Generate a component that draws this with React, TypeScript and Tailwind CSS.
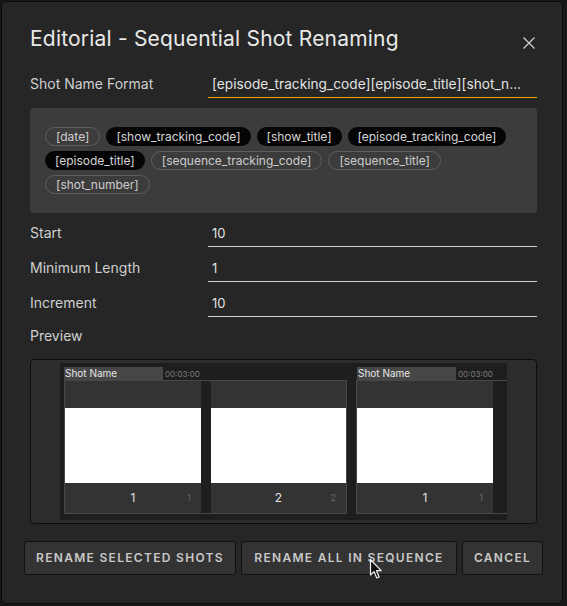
import clsx from "clsx";

type Token = { label: string; filled: boolean };

const tokenRows: Token[][] = [
  [
    { label: "[date]", filled: false },
    { label: "[show_tracking_code]", filled: true },
    { label: "[show_title]", filled: true },
    { label: "[episode_tracking_code]", filled: true },
  ],
  [
    { label: "[episode_title]", filled: true },
    { label: "[sequence_tracking_code]", filled: false },
    { label: "[sequence_title]", filled: false },
  ],
  [{ label: "[shot_number]", filled: false }],
];

function Chip({ token }: { token: Token }) {
  return (
    <span
      className={clsx(
        "inline-flex h-[19px] items-center whitespace-nowrap rounded-full px-[10px] text-[12px] leading-none",
        token.filled
          ? "bg-[#050505] text-[#d6d6d6]"
          : "border border-[#5e5e5e] text-[#cdcdcd]",
      )}
    >
      {token.label}
    </span>
  );
}

function FieldRow({
  label,
  value,
  accent,
}: {
  label: string;
  value: string;
  accent?: boolean;
}) {
  return (
    <div className="flex h-[25px]">
      <div className="flex w-[178px] shrink-0 items-center pb-[4px] text-[14px] text-[#cfcfcf]">
        {label}
      </div>
      <div
        className={clsx(
          "flex min-w-0 flex-1 items-center overflow-hidden whitespace-nowrap border-b pb-[1px] pl-[4px] text-[#e2e2e2]",
          accent ? "border-[#f0a30a] text-[13.7px]" : "border-[#cfcfcf] text-[13px]",
        )}
      >
        {value}
      </div>
    </div>
  );
}

function Panel({ n, width }: { n: number; width: string }) {
  return (
    <div className={clsx("flex shrink-0 flex-col", width)}>
      <div className="h-[27px] bg-[#333333]" />
      <div className="h-[75px] bg-white" />
      <div className="grid h-[30px] grid-cols-[1fr_auto_1fr] items-center bg-[#333333]">
        <span />
        <span className="text-[12px] text-[#e0e0e0]">{n}</span>
        <span className="justify-self-end pr-[10px] text-[9px] text-[#6a6a6a]">
          {n}
        </span>
      </div>
    </div>
  );
}

function ClipHeader({ offset }: { offset?: boolean }) {
  return (
    <div className={clsx("flex h-[13px] items-end", offset && "pl-px")}>
      <div className="h-[13px] w-[99px] bg-[#464646] pl-px text-[10px] leading-[13px] text-[#e6e6e6]">
        Shot Name
      </div>
      <span className="ml-[2px] text-[8px] leading-[11px] text-[#7c7c7c]">
        00:03:00
      </span>
    </div>
  );
}

function Cursor() {
  return (
    <svg
      width="14"
      height="22"
      viewBox="0 0 14 22"
      className="absolute left-[369px] top-[558px]"
    >
      <path
        d="M1.5 1.5 L1.5 17 L5 13.6 L7.8 20 L10.2 19 L7.5 12.7 L12.2 12.7 Z"
        fill="#111"
        stroke="#f2f2f2"
        strokeWidth="1.2"
        strokeLinejoin="round"
      />
    </svg>
  );
}

export default function App() {
  return (
    <div className="relative h-[606px] w-[567px] bg-[#171717] pl-px pt-px font-['Inter',sans-serif]">
      <div className="flex h-[603px] w-[562px] flex-col rounded-[5px] border border-[#0a0a0a] bg-[#262626] pl-[28px] pr-[25px] pt-[23px]">
        <div className="flex h-[28px] items-start justify-between">
          <h1 className="text-[21px] leading-[28px] tracking-[0.2px] text-[#e9e9e9]">
            Editorial - Sequential Shot Renaming
          </h1>
          <svg width="12" height="12" viewBox="0 0 12 12" className="mr-[2px] mt-[12px]">
            <path d="M0.5 0.5 L11.5 11.5 M11.5 0.5 L0.5 11.5" stroke="#cfcfcf" strokeWidth="1.3" />
          </svg>
        </div>

        <div className="mt-[20px]">
          <FieldRow
            label="Shot Name Format"
            value="[episode_tracking_code][episode_title][shot_n…"
            accent
          />
        </div>

        <div className="mt-[10px] flex h-[105px] flex-col gap-[5px] rounded-[4px] bg-[#3c3c3c] px-[15px] pt-[19px]">
          {tokenRows.map((row, i) => (
            <div key={i} className="flex gap-[6px]">
              {row.map((t) => (
                <Chip key={t.label} token={t} />
              ))}
            </div>
          ))}
        </div>

        <div className="mt-[9px] flex flex-col gap-[10px]">
          <FieldRow label="Start" value="10" />
          <FieldRow label="Minimum Length" value="1" />
          <FieldRow label="Increment" value="10" />
        </div>

        <div className="mt-[8px] flex h-[24px] items-center pb-[3px] text-[14px] text-[#cfcfcf]">
          Preview
        </div>

        <div className="mt-[10px] h-[165px] rounded-[4px] border border-[#0d0d0d] bg-[#2d2d2d] px-[29px] py-[3px]">
          <div className="flex h-[157px] w-[447px] gap-[9px] overflow-hidden bg-[#1e1e1e] pl-[4px] pt-[4px]">
            <div className="flex w-[283px] shrink-0 flex-col">
              <ClipHeader />
              <div className="flex h-[134px] border border-[#474747]">
                <Panel n={1} width="w-[136px]" />
                <div className="w-[10px] shrink-0 bg-[#1e1e1e]" />
                <Panel n={2} width="w-[135px]" />
              </div>
            </div>
            <div className="flex w-[283px] shrink-0 flex-col">
              <ClipHeader offset />
              <div className="flex h-[134px] border border-[#474747]">
                <Panel n={1} width="w-[136px]" />
                <div className="w-[20px] shrink-0 bg-[#1e1e1e]" />
              </div>
            </div>
          </div>
        </div>

        <div className="-ml-[6px] mt-[17px] flex gap-[5px]">
          {[
            { label: "Rename Selected Shots", w: "w-[212px]" },
            { label: "Rename All in Sequence", w: "w-[216px]" },
            { label: "Cancel", w: "w-[81px]" },
          ].map((b) => (
            <button
              key={b.label}
              className={clsx(
                "h-[34px] shrink-0 whitespace-nowrap rounded-[3px] border border-[#101010] bg-[#333333] text-[12px] font-semibold uppercase tracking-[1.3px] text-[#c8c8c8]",
                b.w,
              )}
            >
              {b.label}
            </button>
          ))}
        </div>
      </div>
      <Cursor />
    </div>
  );
}
